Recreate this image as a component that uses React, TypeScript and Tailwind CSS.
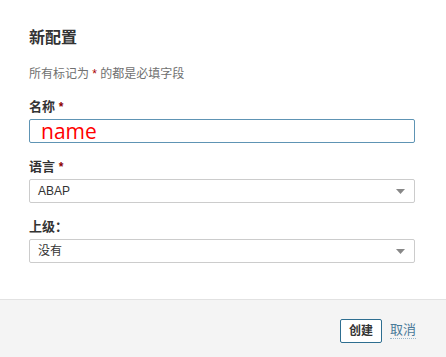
import React from "react";

const font = { fontFamily: '"Liberation Sans", "Noto Sans CJK SC", sans-serif' };

function Caret() {
  return (
    <svg width="9" height="5" viewBox="0 0 9 5" className="shrink-0">
      <path d="M0 0 H9 L4.5 5 Z" fill="#888" />
    </svg>
  );
}

export default function App() {
  return (
    <div className="w-[446px] h-[357px] bg-white flex flex-col text-[#333]" style={font}>
      <div className="flex-1 px-[29px] pt-[27px] flex flex-col">
        <h2 className="text-[16px] font-bold leading-[22px] text-[#333]">新配置</h2>
        <p className="mt-[17px] text-[12px] leading-[16px] text-[#707070]">
          所有标记为 <span className="text-[#a00]">*</span> 的都是必填字段
        </p>
        <label className="mt-[17px] text-[13px] font-bold leading-[16px]">
          名称 <span className="text-[#8b0000] text-[12px]">*</span>
        </label>
        <div className="mt-[4px] w-[386px] h-[24px] border border-[#5e94b4] rounded-[2px] flex items-center pl-[11px]">
          <span className="text-[21px] leading-none text-[#ff0000]" style={{ fontFamily: '"Open Sans", "Noto Sans", sans-serif' }}>name</span>
        </div>
        <label className="mt-[16px] text-[13px] font-bold leading-[16px]">
          语言 <span className="text-[#8b0000] text-[12px]">*</span>
        </label>
        <div className="mt-[4px] w-[386px] h-[24px] border border-[#cccccc] rounded-[2px] flex items-center justify-between pl-[8px] pr-[9px]">
          <span className="text-[12px] text-[#333]">ABAP</span>
          <Caret />
        </div>
        <label className="mt-[16px] text-[13px] font-bold leading-[16px]">上级：</label>
        <div className="mt-[4px] w-[386px] h-[24px] border border-[#cccccc] rounded-[2px] flex items-center justify-between pl-[8px] pr-[9px]">
          <span className="text-[12px] text-[#333]">没有</span>
          <Caret />
        </div>
      </div>
      <div className="h-[58px] bg-[#f4f4f4] border-t border-[#e2e2e2] flex items-center justify-end pr-[30px] gap-[8px] pt-[4px]">
        <button className="h-[24px] w-[42px] border border-[#2e6e90] rounded-[2px] bg-white text-[12px] font-semibold text-[#333]">创建</button>
        <a className="text-[13px] text-[#4a7a99] border-b border-dotted border-[#9ab8cc] leading-[16px]">取消</a>
      </div>
    </div>
  );
}
